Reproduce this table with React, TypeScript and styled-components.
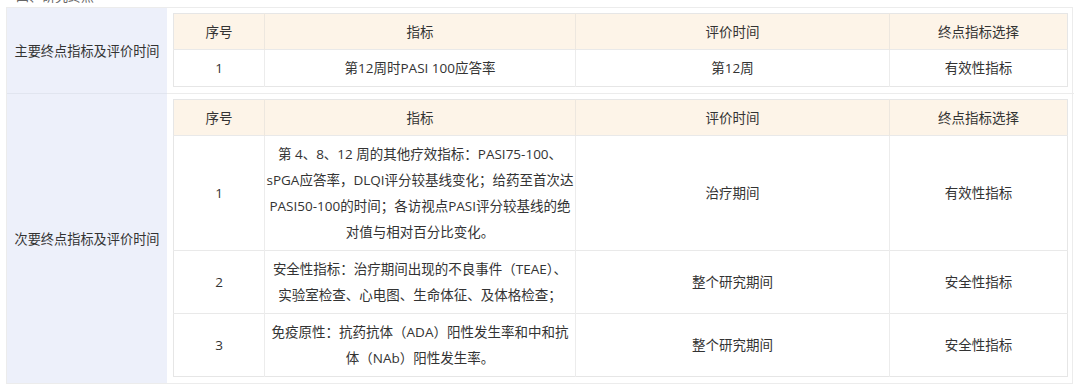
import React from "react";
import styled, { createGlobalStyle } from "styled-components";

const Global = createGlobalStyle`
  html, body { margin: 0; padding: 0; background: #ffffff; }
  body {
    font-family: "Open Sans", "Noto Sans CJK SC", sans-serif;
    color: #333333;
  }
`;

const Page = styled.div`
  width: 1080px;
  height: 388px;
  overflow: hidden;
  box-sizing: border-box;
  padding: 0 7px 0 6px;
`;

const TitleStrip = styled.div`
  height: 7px;
  overflow: hidden;
  display: flex;
  align-items: flex-end;
  padding-left: 10px;
  box-sizing: border-box;
`;

const TitleText = styled.span`
  font-size: 13px;
  line-height: 16px;
  margin-bottom: 3px;
  color: #666;
`;

const Outer = styled.div`
  display: grid;
  grid-template-columns: 160px 1fr;
  border: 1px solid #ececec;
`;

const Label = styled.div<{ $last?: boolean }>`
  background: #edf0fa;
  display: flex;
  align-items: center;
  justify-content: center;
  font-family: "Noto Sans CJK SC", sans-serif;
  font-size: 13.2px;
  color: #333;
  border-bottom: ${(p) => (p.$last ? "none" : "1px solid #e1e5ef")};
`;

const Content = styled.div<{ $last?: boolean }>`
  padding: 5px 6px 6px 6px;
  border-bottom: ${(p) => (p.$last ? "none" : "1px solid #ececec")};
`;

const Table = styled.table`
  width: 100%;
  border-collapse: collapse;
  table-layout: fixed;
  font-size: 13.5px;
  color: #333;
  border: 1px solid #e6e6e6;
`;

const Th = styled.th`
  background: #fdf4e8;
  font-weight: normal;
  padding: 5px 4px 4px;
  line-height: 26px;
  border-right: 1px solid #ede7df;
  text-align: center;
  &:last-child { border-right: none; }
`;

const Td = styled.td`
  padding: 5px 1px;
  border-top: 1px solid #e9e9e9;
  border-right: 1px solid #ececec;
  text-align: center;
  line-height: 26px;
  &:last-child { border-right: none; }
`;

const Line = styled.span`
  display: block;
  white-space: nowrap;
`;

const cols = [91, 311, 314, 178];

function Head() {
  return (
    <>
      <colgroup>
        {cols.map((w, i) => (
          <col key={i} style={{ width: w }} />
        ))}
      </colgroup>
      <thead>
        <tr>
          <Th>序号</Th>
          <Th>指标</Th>
          <Th>评价时间</Th>
          <Th>终点指标选择</Th>
        </tr>
      </thead>
    </>
  );
}

function Lines({ items }: { items: string[] }) {
  return (
    <>
      {items.map((t, i) => (
        <Line key={i}>{t}</Line>
      ))}
    </>
  );
}

export default function App() {
  return (
    <>
      <Global />
      <Page>
        <TitleStrip>
          <TitleText>四、研究终点</TitleText>
        </TitleStrip>
        <Outer>
          <Label>主要终点指标及评价时间</Label>
          <Content>
            <Table>
              <Head />
              <tbody>
                <tr>
                  <Td>1</Td>
                  <Td>第12周时PASI 100应答率</Td>
                  <Td>第12周</Td>
                  <Td>有效性指标</Td>
                </tr>
              </tbody>
            </Table>
          </Content>
          <Label $last>次要终点指标及评价时间</Label>
          <Content $last>
            <Table>
              <Head />
              <tbody>
                <tr>
                  <Td>1</Td>
                  <Td>
                    <Lines
                      items={[
                        "第 4、8、12 周的其他疗效指标：PASI75-100、",
                        "sPGA应答率，DLQI评分较基线变化；给药至首次达",
                        "PASI50-100的时间；各访视点PASI评分较基线的绝",
                        "对值与相对百分比变化。",
                      ]}
                    />
                  </Td>
                  <Td>治疗期间</Td>
                  <Td>有效性指标</Td>
                </tr>
                <tr>
                  <Td>2</Td>
                  <Td>
                    <Lines
                      items={[
                        "安全性指标：治疗期间出现的不良事件（TEAE）、",
                        "实验室检查、心电图、生命体征、及体格检查；",
                      ]}
                    />
                  </Td>
                  <Td>整个研究期间</Td>
                  <Td>安全性指标</Td>
                </tr>
                <tr>
                  <Td>3</Td>
                  <Td>
                    <Lines
                      items={[
                        "免疫原性：抗药抗体（ADA）阳性发生率和中和抗",
                        "体（NAb）阳性发生率。",
                      ]}
                    />
                  </Td>
                  <Td>整个研究期间</Td>
                  <Td>安全性指标</Td>
                </tr>
              </tbody>
            </Table>
          </Content>
        </Outer>
      </Page>
    </>
  );
}
